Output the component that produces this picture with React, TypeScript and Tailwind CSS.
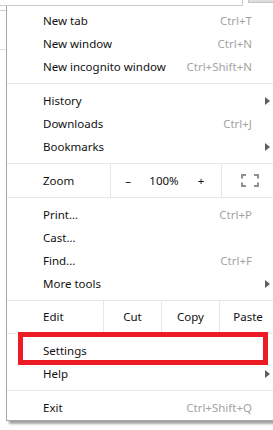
import React from "react";

const FONT = { fontFamily: '"Noto Sans", "Open Sans", Arial, sans-serif' };

function Arrow() {
  return (
    <svg width="5" height="8" viewBox="0 0 5 8" className="block">
      <path d="M0 0 L5 4 L0 8 Z" fill="#5f5f5f" />
    </svg>
  );
}

function Row({ label, shortcut, sub }: { label: string; shortcut?: string; sub?: boolean }) {
  return (
    <div className="flex h-[23px] items-center pl-[36px] text-[11.5px] text-[#111111]">
      <span className="flex-1 whitespace-nowrap">{label}</span>
      {shortcut && <span className="whitespace-nowrap text-[#a3a3a3]">{shortcut}</span>}
      <span className="flex w-[39px] shrink-0 items-center pl-[13px]">{sub && <Arrow />}</span>
    </div>
  );
}

function Sep() {
  return <div className="h-px bg-[#e8e8e8]" />;
}

function Gap() {
  return <div className="h-[5px]" />;
}

export default function App() {
  return (
    <div className="relative h-[430px] w-[273px] overflow-hidden bg-white" style={FONT}>
      {/* browser background behind the menu */}
      <div className="absolute left-0 top-[5px] h-px w-[242px] bg-[#c9c9c9]" />
      <div className="absolute left-[242px] top-0 h-[6px] w-px bg-[#c9c9c9]" />
      <div className="absolute left-[248px] top-0 h-[3px] w-[30px] border-b border-l border-[#c4c4c4] bg-[#dedede]" />
      <div className="absolute left-0 top-[10px] h-px w-[6px] bg-[#d2d2d2]" />
      <div className="absolute left-0 top-[49px] h-px w-[6px] bg-[#dcdcdc]" />

      {/* menu */}
      <div className="absolute left-[6px] top-[6px] w-[285px] border-b border-l border-[#a6a6a6] bg-white pb-[1px] pt-[3px] shadow-[3px_3px_2px_rgba(0,0,0,0.35)]">
        <Row label="New tab" shortcut="Ctrl+T" />
        <Row label="New window" shortcut="Ctrl+N" />
        <Row label="New incognito window" shortcut="Ctrl+Shift+N" />
        <Gap />
        <Sep />
        <Gap />
        <Row label="History" sub />
        <Row label="Downloads" shortcut="Ctrl+J" />
        <Row label="Bookmarks" sub />
        <Gap />
        <Sep />
        <div className="flex h-[33px] items-stretch text-[11.5px] text-[#111111]">
          <div className="flex w-[103px] items-center pl-[36px]">Zoom</div>
          <div className="flex w-[112px] items-center border-l border-r border-[#e6e6e6]">
            <span className="w-[34px] text-center">–</span>
            <span className="w-[38px] text-center">100%</span>
            <span className="w-[36px] text-center">+</span>
          </div>
          <div className="flex w-[55px] items-center justify-center">
            <svg width="18" height="13" viewBox="0 0 18 13" className="block">
              <g fill="none" stroke="#8f8f8f" strokeWidth="2">
                <path d="M1 4.5 V1 H5" />
                <path d="M13 1 H17 V4.5" />
                <path d="M1 8.5 V12 H5" />
                <path d="M13 12 H17 V8.5" />
              </g>
            </svg>
          </div>
        </div>
        <Sep />
        <Gap />
        <Row label="Print..." shortcut="Ctrl+P" />
        <Row label="Cast..." />
        <Row label="Find..." shortcut="Ctrl+F" />
        <Row label="More tools" sub />
        <Gap />
        <Sep />
        <div className="flex h-[32px] items-stretch text-[11.5px] text-[#111111]">
          <div className="flex w-[96px] items-center pl-[36px]">Edit</div>
          <div className="flex w-[58px] items-center justify-center border-l border-[#e6e6e6]">Cut</div>
          <div className="flex w-[58px] items-center justify-center border-l border-[#e6e6e6]">Copy</div>
          <div className="flex w-[58px] items-center justify-center border-l border-r border-[#e6e6e6]">Paste</div>
        </div>
        <Sep />
        <Gap />
        <Row label="Settings" />
        <Row label="Help" sub />
        <Gap />
        <Sep />
        <Gap />
        <Row label="Exit" shortcut="Ctrl+Shift+Q" />
      </div>

      {/* red highlight */}
      <div className="absolute left-[18px] top-[332px] h-[33px] w-[250px] border-[5px] border-[#ed1c24]" />
    </div>
  );
}
